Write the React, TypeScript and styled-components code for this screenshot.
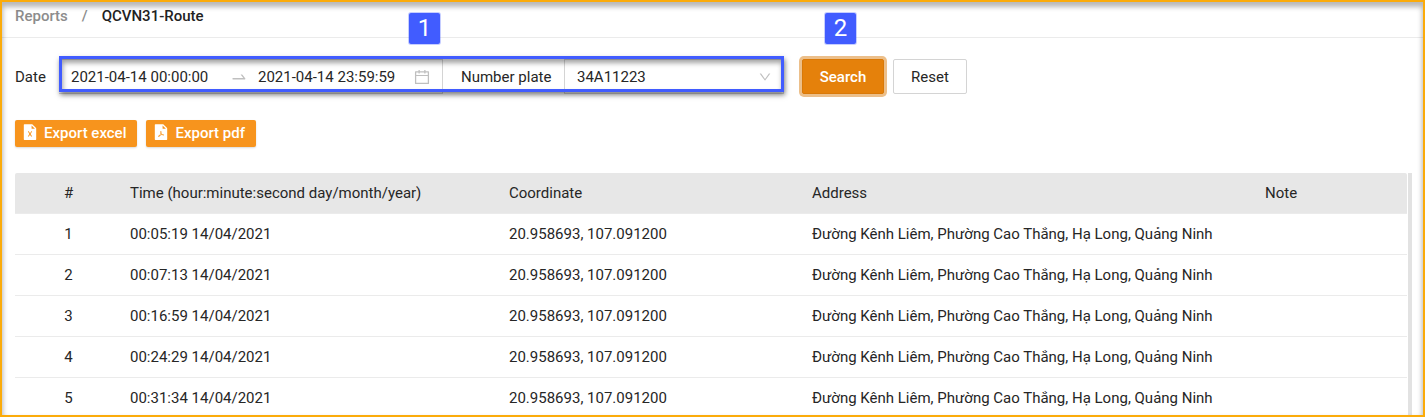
import React from "react";
import styled, { createGlobalStyle } from "styled-components";
import {
  AiFillFileExcel,
  AiFillFilePdf,
  AiOutlineCalendar,
  AiOutlineDown,
  AiOutlineSwapRight,
} from "react-icons/ai";

const GlobalStyle = createGlobalStyle`
  *, *::before, *::after { box-sizing: border-box; }
  body {
    margin: 0;
    background: #fff;
    color: #262626;
    font: 400 15px/22px Roboto, "Liberation Sans", sans-serif;
  }
  button, input, select { font: inherit; color: inherit; }
`;

const Frame = styled.div`
  position: relative;
  display: flex;
  flex-direction: column;
  height: 100vh;
  overflow: hidden;
  border: 2px solid #fbab0a;

  &::after {
    content: "";
    position: absolute;
    inset: 0;
    box-shadow: inset 0 4px 5px 1px rgba(0, 0, 0, 0.28);
    pointer-events: none;
  }
`;

const Breadcrumb = styled.nav`
  display: flex;
  flex: none;
  gap: 14px;
  height: 36px;
  padding: 3px 13px 0;
  border-bottom: 1px solid #ebebeb;
  color: #8c8c8c;
  font-weight: 500;
`;

const Crumb = styled.a`
  color: inherit;
  text-decoration: none;

  &[aria-current] { color: #222; }
`;

const Filters = styled.form`
  display: flex;
  flex: none;
  align-items: center;
  padding: 21px 13px 0;
`;

const Label = styled.label<{ $width: number }>`
  flex: none;
  width: ${(p) => p.$width}px;
`;

const FilterGroup = styled.div`
  position: relative;
  display: flex;
  align-items: center;
  width: 725px;
`;

const Highlight = styled.div`
  position: absolute;
  inset: -3px 0 2px;
  border: 3px solid #415cff;
  box-shadow: 1px 3px 5px rgba(0, 0, 0, 0.5), inset 1px 4px 5px rgba(0, 0, 0, 0.36);
  pointer-events: none;
`;

const Step = styled.span<{ $left: number }>`
  position: absolute;
  top: -46px;
  left: ${(p) => p.$left}px;
  width: 31px;
  height: 31px;
  border-radius: 2px;
  background: #415cff;
  box-shadow: 0 0 0 1px rgba(65, 92, 255, 0.3);
  color: #fff;
  font-size: 24px;
  line-height: 31px;
  text-align: center;
`;

const DateRange = styled.div`
  display: flex;
  align-items: center;
  width: 384px;
  height: 35px;
  padding: 0 11px 0 12px;
  border: 1px solid #d4d4d4;
  border-left: 0;
  color: #bfbfbf;
`;

const DateInput = styled.input`
  width: 159px;
  min-width: 0;
  height: 22px;
  padding: 0;
  border: 0;
  background: none;
  color: #262626;
  outline: 0;

  &:last-of-type { flex: 1; }
`;

const RangeArrow = styled.span`
  display: flex;
  flex: none;
  width: 28px;
`;

const PlateLabel = styled.label`
  width: 121px;
  padding-left: 18px;
`;

const PlateField = styled.div`
  display: flex;
  flex: 1;
  align-items: center;
  height: 35px;
  padding-right: 11px;
  border: 1px solid #d4d4d4;
  color: #bfbfbf;
`;

const PlateSelect = styled.select`
  flex: 1;
  height: 33px;
  padding: 0 12px;
  border: 0;
  background: none;
  appearance: none;
  color: #262626;
  outline: 0;
`;

const SearchWrap = styled.div`
  position: relative;
  margin-left: 18px;
`;

const ActionButton = styled.button<{ $primary?: boolean }>`
  display: block;
  width: ${(p) => (p.$primary ? 82 : 74)}px;
  height: 35px;
  padding: 0;
  border: 1px solid ${(p) => (p.$primary ? "#d97908" : "#d4d4d4")};
  border-radius: 2px;
  background: ${(p) => (p.$primary ? "#e5810b" : "#fff")};
  box-shadow: ${(p) => (p.$primary ? "0 0 0 3px #ecbf8a" : "none")};
  color: ${(p) => (p.$primary ? "#fff" : "#262626")};
  font-weight: ${(p) => (p.$primary ? 500 : 400)};
`;

const ResetButton = styled(ActionButton)`
  margin-left: 9px;
`;

const Exports = styled.div`
  display: flex;
  flex: none;
  gap: 9px;
  padding: 26px 13px;
`;

const ExportButton = styled.button`
  display: flex;
  align-items: center;
  gap: 5px;
  height: 27px;
  padding: 0 11px 1px 6px;
  border: 0;
  border-radius: 2px;
  background: #f7941d;
  box-shadow: 0 1px 2px rgba(0, 0, 0, 0.15);
  color: #fff;
  font-weight: 500;

  svg { margin-bottom: 2px; }
`;

const TablePane = styled.div`
  display: flex;
  flex: 1;
  gap: 1px;
  min-height: 0;
  padding: 0 11px 0 13px;
  overflow: hidden;
`;

const ScrollTrack = styled.div`
  flex: none;
  width: 4px;
  background: #e2e2e2;
`;

const Table = styled.table`
  flex: 1;
  align-self: flex-start;
  table-layout: fixed;
  border-collapse: separate;
  border-spacing: 0;

  th, td {
    height: 41px;
    padding: 0 8px;
    border-bottom: 1px solid #ebebeb;
    font-weight: 400;
    text-align: left;
    white-space: nowrap;
  }
  th { background: #e7e7e7; }
  th:first-child, td:first-child { text-align: center; }
  th:first-child { border-top-left-radius: 2px; }
  th:last-child { border-top-right-radius: 2px; }
`;

const columns = [
  { title: "#", width: 107 },
  { title: "Time (hour:minute:second day/month/year)", width: 379 },
  { title: "Coordinate", width: 303 },
  { title: "Address", width: 453 },
  { title: "Note", width: 150 },
];

const times = ["00:05:19", "00:07:13", "00:16:59", "00:24:29", "00:31:34"];

export default function App() {
  return (
    <>
      <GlobalStyle />
      <Frame>
        <Breadcrumb aria-label="Breadcrumb">
          <Crumb href="#reports">Reports</Crumb>
          <span>/</span>
          <Crumb href="#route" aria-current="page">QCVN31-Route</Crumb>
        </Breadcrumb>

        <Filters onSubmit={(e) => e.preventDefault()}>
          <Label htmlFor="from" $width={44}>Date</Label>
          <FilterGroup>
            <DateRange>
              <DateInput id="from" defaultValue="2021-04-14 00:00:00" />
              <RangeArrow><AiOutlineSwapRight size={18} /></RangeArrow>
              <DateInput aria-label="End date" defaultValue="2021-04-14 23:59:59" />
              <AiOutlineCalendar size={18} />
            </DateRange>
            <PlateLabel htmlFor="plate">Number plate</PlateLabel>
            <PlateField>
              <PlateSelect id="plate">
                <option>34A11223</option>
              </PlateSelect>
              <AiOutlineDown size={14} />
            </PlateField>
            <Highlight />
            <Step $left={350}>1</Step>
          </FilterGroup>
          <SearchWrap>
            <ActionButton $primary type="submit">Search</ActionButton>
            <Step $left={23}>2</Step>
          </SearchWrap>
          <ResetButton type="reset">Reset</ResetButton>
        </Filters>

        <Exports>
          <ExportButton type="button"><AiFillFileExcel size={18} />Export excel</ExportButton>
          <ExportButton type="button"><AiFillFilePdf size={18} />Export pdf</ExportButton>
        </Exports>

        <TablePane>
          <Table>
            <colgroup>
              {columns.map((c) => <col key={c.title} width={c.width} />)}
            </colgroup>
            <thead>
              <tr>{columns.map((c) => <th key={c.title} scope="col">{c.title}</th>)}</tr>
            </thead>
            <tbody>
              {times.map((time, i) => (
                <tr key={time}>
                  <td>{i + 1}</td>
                  <td>{time} 14/04/2021</td>
                  <td>20.958693, 107.091200</td>
                  <td>Đường Kênh Liêm, Phường Cao Thắng, Hạ Long, Quảng Ninh</td>
                  <td />
                </tr>
              ))}
            </tbody>
          </Table>
          <ScrollTrack />
        </TablePane>
      </Frame>
    </>
  );
}
